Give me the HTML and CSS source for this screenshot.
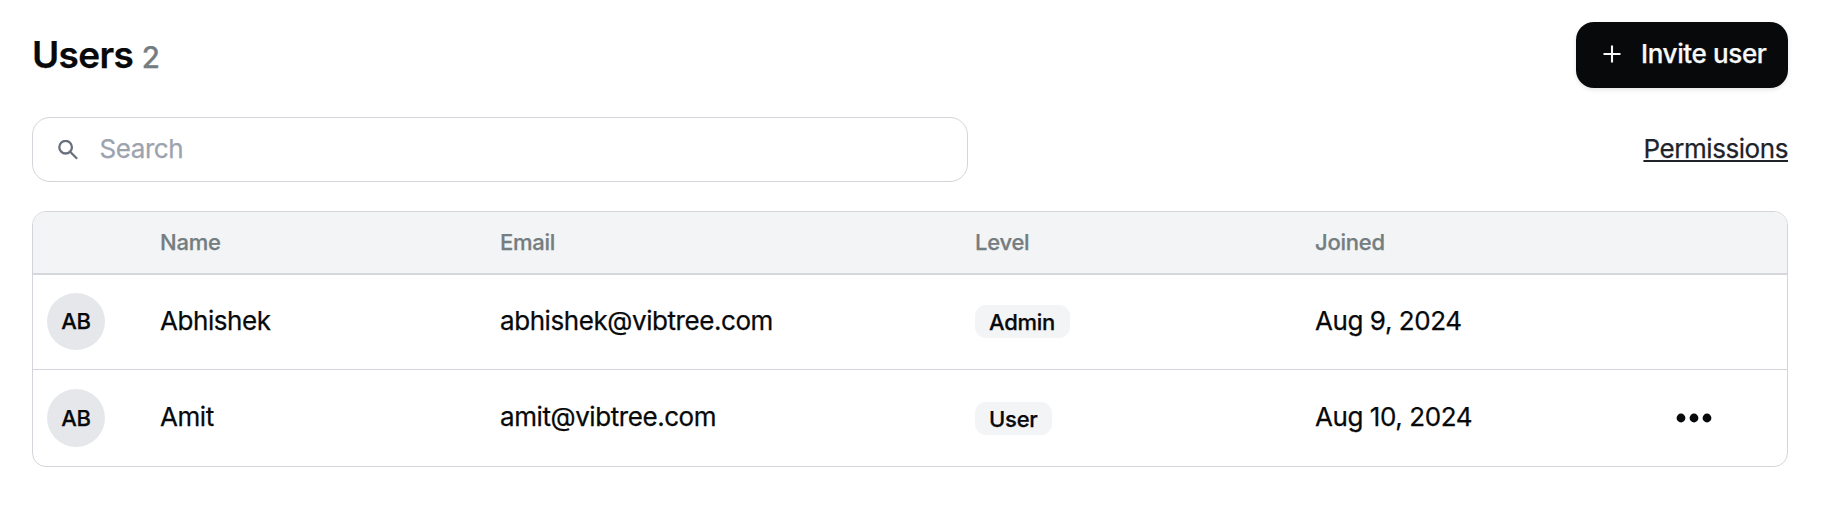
FILE: index.html
```html
<!DOCTYPE html>
<html lang="en">
<head>
<meta charset="utf-8">
<title>Users</title>
<link rel="stylesheet" href="styles.css">
</head>
<body>
<main class="page">
  <header class="header">
    <h1 class="title">Users <span class="count">2</span></h1>
    <button class="invite" type="button">
      <svg class="invite-icon" viewBox="0 0 18 18" width="18" height="18"><path d="M9 .5v17M.5 9h17" fill="none" stroke="currentColor" stroke-width="2.1"/></svg>
      <span>Invite user</span>
    </button>
  </header>
  <div class="toolbar">
    <label class="search">
      <svg class="search-icon" viewBox="0 0 20 20" width="20" height="20"><g fill="none" stroke="currentColor" stroke-width="2.3"><circle cx="7.6" cy="7.2" r="6.3"/><path d="M12.1 11.8l7 7"/></g></svg>
      <input class="search-input" type="text" placeholder="Search">
    </label>
    <a class="permissions">Permissions</a>
  </div>
  <section class="table">
    <div class="row head"><span></span><span>Name</span><span>Email</span><span>Level</span><span>Joined</span><span></span></div>
    <div class="row">
      <span class="avatar">AB</span><span>Abhishek</span><span>abhishek@vibtree.com</span><span class="level"><span class="badge">Admin</span></span><span>Aug 9, 2024</span><span></span>
    </div>
    <div class="row last">
      <span class="avatar">AB</span><span>Amit</span><span>amit@vibtree.com</span><span class="level"><span class="badge">User</span></span><span>Aug 10, 2024</span>
      <svg class="more" viewBox="0 0 36 10" width="36" height="10" fill="currentColor"><circle cx="5" cy="5" r="4.4"/><circle cx="18" cy="5" r="4.4"/><circle cx="31" cy="5" r="4.4"/></svg>
    </div>
  </section>
</main>
</body>
</html>
```
FILE: styles.css
```css
* { box-sizing: border-box; }
body {
  margin: 0;
  background: #fff;
  color: #08090a;
  font: 400 26px/36px Inter, "Liberation Sans", sans-serif;
  letter-spacing: -.43px;
  -webkit-text-stroke: .25px currentColor;
}
.page { padding: 22px 56px 0 32px; }
.header, .toolbar {
  display: flex;
  align-items: center;
  justify-content: space-between;
}
.header { height: 66px; }
.title { margin: 0; padding-top: 1px; font-size: 37px; line-height: 44px; font-weight: 600; letter-spacing: -.68px; }
.count { font-size: 29.5px; font-weight: 500; color: #747d80; }
.invite {
  display: flex;
  align-items: center;
  gap: 20px;
  width: 212px;
  height: 66px;
  padding: 0 0 2px 27px;
  border: 0;
  border-radius: 18px;
  background: #08090a;
  color: #f8f9fa;
  font: 500 26px/36px Inter, "Liberation Sans", sans-serif;
  letter-spacing: -.37px;
  white-space: nowrap;
  box-shadow: 0 2px 4px rgba(0, 0, 0, .1);
}
.toolbar { margin-top: 29px; height: 65px; }
.search {
  display: flex;
  align-items: center;
  gap: 21.5px;
  width: 936px;
  height: 65px;
  padding-left: 25px;
  border: 1px solid #d3d5da;
  border-radius: 18px;
}
.search-icon { color: #68707d; }
.search-input {
  flex: 1;
  border: 0;
  padding: 0 0 1px;
  outline: 0;
  background: transparent;
  font: inherit;
  letter-spacing: inherit;
}
.search-input::placeholder { color: #9ca3af; }
.permissions {
  padding-bottom: 1px;
  color: #202329;
  text-decoration: underline;
  text-decoration-thickness: 2px;
  text-underline-offset: 2px;
}
.table {
  margin-top: 29px;
  border: 1px solid #d3d5da;
  border-radius: 14px;
  overflow: hidden;
}
.row {
  display: grid;
  grid-template-columns: 113px 340px 475px 340px 361px 1fr;
  align-items: center;
  height: 95px;
  padding-left: 14px;
  border-bottom: 1px solid #d3d5da;
}
.row > span:not(.avatar):not(.level) { padding-bottom: 2px; }
.last { height: 96px; border-bottom: 0; }
.head {
  height: 63px;
  border-bottom: 2px solid #d5d7dc;
  background: #f3f4f6;
  color: #747d80;
  font-size: 22px;
  font-weight: 500;
  letter-spacing: -.25px;
}
.avatar {
  display: flex;
  align-items: center;
  justify-content: center;
  width: 58px;
  height: 57px;
  padding-bottom: 1px;
  margin-bottom: 1px;
  border-radius: 50%;
  background: #e5e7eb;
  font-size: 22px;
  font-weight: 500;
  letter-spacing: -.2px;
}
.last .avatar { height: 58px; padding-bottom: 0; margin-bottom: 0; }
.level { display: flex; padding-bottom: 1px; }
.last .level { padding-bottom: 0; }
.badge {
  height: 33px;
  padding: 0 14.5px 0 14px;
  border-radius: 11px;
  background: #f3f4f6;
  font-size: 22px;
  line-height: 35px;
  font-weight: 500;
  letter-spacing: -.25px;
}
```
